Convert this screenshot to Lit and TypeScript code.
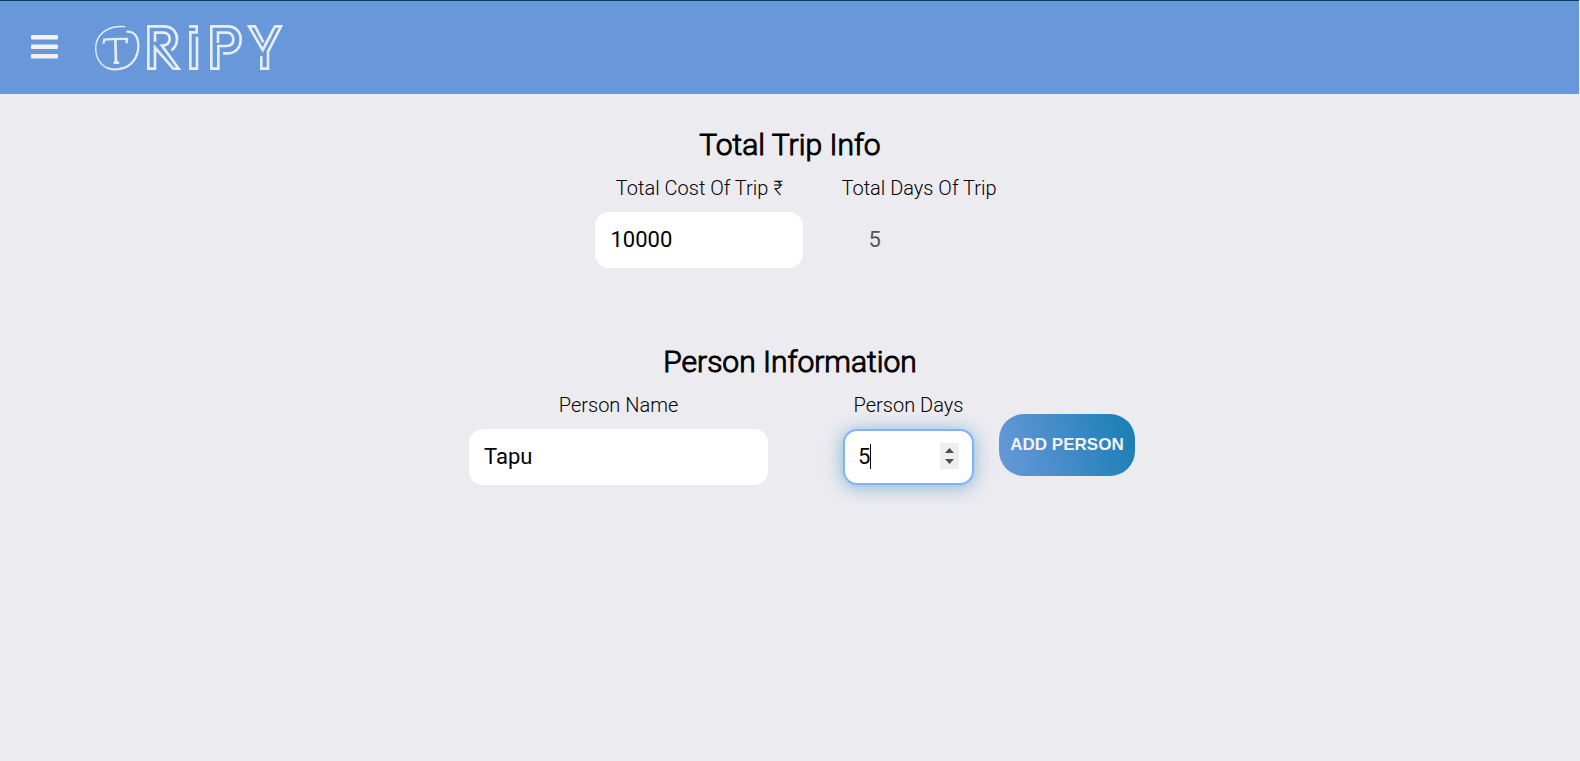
import { LitElement, html, css, svg } from "lit";
import { customElement, state } from "lit/decorators.js";

const logo = svg`
  <g fill="none" stroke="#e6edf7" stroke-linecap="round">
    <path stroke-width="4" d="M374 80C322 76 287 104 287 145C287 172 300 195 322 204"/>
    <path stroke-width="6" d="M322 204C332 208 350 209 362 206"/>
    <path stroke-width="7" d="M362 206C396 200 415 170 415 138C415 110 402 95 382 95"/>
    <path stroke-width="7" d="M311 128L313 119Q346 116 381 117L380 127"/>
    <path stroke-width="8" d="M346 119L348 188M344 188H354"/>
  </g>
  <g fill="none" stroke="#e6edf7" stroke-width="8">
    <path d="M465 125V98H490C502 98 509 106 509 116C509 128 501 136 486 137L536 206H520L465 143V206H445V79H490C518 79 531 97 531 116C531 132 525 143 514 151"/>
    <path d="M591 110V206H571V97H590V79H567"/>
    <path d="M654 129V98H680C692 98 700 106 700 118C700 131 692 138 680 138H655V206H634V79H682C708 79 722 96 722 118C722 144 706 160 682 160H669"/>
    <path d="M784 169V206H804V155L843 79H825L796 134M812 106L788 150L747 79H765L790 127"/>
  </g>`;

@customElement("app-root")
export class AppRoot extends LitElement {
  static styles = css`
    :host {
      display: block;
      min-height: 100vh;
      background: #ecebf0;
      color: #000;
      font-family: Roboto, "Liberation Sans", sans-serif;
    }
    * {
      box-sizing: border-box;
    }
    .bar {
      display: flex;
      align-items: center;
      gap: 36px;
      height: 94px;
      margin-right: 1px;
      padding-bottom: 1px;
      padding-left: 31px;
      border-top: 1px solid #004050;
      background: #6998da;
    }
    .menu {
      display: flex;
      padding: 0;
      border: 0;
      background: none;
    }
    .home {
      display: flex;
    }
    .section {
      display: flex;
      flex-direction: column;
      align-items: center;
      height: 217px;
      padding-top: 33px;
    }
    h2 {
      margin: 0;
      font-size: 30px;
      font-weight: 300;
      line-height: 36px;
      -webkit-text-stroke: 1px #000;
    }
    .row {
      display: flex;
      align-items: flex-start;
      margin-top: 13px;
    }
    .trip {
      gap: 38px;
      padding-left: 12px;
    }
    .person {
      padding-left: 24px;
    }
    .field {
      display: flex;
      flex-direction: column;
      align-items: center;
      gap: 12px;
    }
    label {
      font-size: 20px;
      font-weight: 300;
      line-height: 24px;
    }
    input {
      width: 131px;
      height: 56px;
      padding: 0 13px 2px;
      border: 2px solid transparent;
      border-radius: 14px;
      outline: 0;
      background: #fff;
      color: #000;
      font: 400 22px/28px Roboto, "Liberation Sans", sans-serif;
    }
    .cost {
      width: 208px;
    }
    .name {
      width: 299px;
    }
    .total {
      background: transparent;
      color: #545454;
    }
    .plain {
      appearance: textfield;
    }
    .plain::-webkit-inner-spin-button {
      display: none;
    }
    .days {
      margin-left: 75px;
    }
    .box {
      position: relative;
      display: flex;
    }
    .active {
      border-color: #80b3ff;
      box-shadow: 0 2px 18px rgba(24, 126, 180, 0.5);
      caret-color: transparent;
    }
    .active::-webkit-inner-spin-button {
      appearance: none;
      width: 19px;
      height: 26px;
      opacity: 1;
      background: #efefef
        url("data:image/svg+xml,%3Csvg xmlns='http://www.w3.org/2000/svg' width='19' height='26'%3E%3Cpath fill='%23505050' d='M5 10L9.5 5L14 10ZM5 16H14L9.5 21Z'/%3E%3C/svg%3E");
    }
    .caret {
      position: absolute;
      top: 15px;
      left: 27px;
      width: 1px;
      height: 25px;
      background: #000;
    }
    .add {
      width: 136px;
      height: 62px;
      margin: 21px 0 0 25px;
      padding: 0;
      border: 0;
      border-radius: 25px;
      background: linear-gradient(75deg, #6998da, #187eb4);
      color: #f2f2f2;
      font: 700 17px/20px "Liberation Sans", Arial, sans-serif;
    }
  `;

  @state() private cost = 10000;
  @state() private totalDays = 5;
  @state() private personName = "Tapu";
  @state() private personDays = 5;

  render() {
    return html`
      <header class="bar">
        <button class="menu" aria-label="Menu">
          <svg width="27" height="24" viewBox="0 0 27 24" fill="#f2f2f2">
            <rect width="27" height="4.5" rx="1" />
            <rect y="9.5" width="27" height="4.5" rx="1" />
            <rect y="19" width="27" height="4.5" rx="1" />
          </svg>
        </button>
        <a class="home" href="#" aria-label="Tripy">
          <svg width="190" height="47" viewBox="282 72 570 141">${logo}</svg>
        </a>
      </header>
      <main>
        <section class="section">
          <h2>Total Trip Info</h2>
          <div class="row trip">
            <div class="field">
              <label for="cost">Total Cost Of Trip ₹</label>
              <input id="cost" class="cost plain" type="number" .value=${String(this.cost)} />
            </div>
            <div class="field">
              <label for="total">Total Days Of Trip</label>
              <input id="total" class="total plain" type="number" disabled .value=${String(this.totalDays)} />
            </div>
          </div>
        </section>
        <section class="section">
          <h2>Person Information</h2>
          <div class="row person">
            <div class="field">
              <label for="name">Person Name</label>
              <input id="name" class="name" type="text" .value=${this.personName} />
            </div>
            <div class="field days">
              <label for="days">Person Days</label>
              <div class="box">
                <input id="days" class="active" type="number" .value=${String(this.personDays)} />
                <span class="caret"></span>
              </div>
            </div>
            <button class="add">ADD PERSON</button>
          </div>
        </section>
      </main>
    `;
  }
}
